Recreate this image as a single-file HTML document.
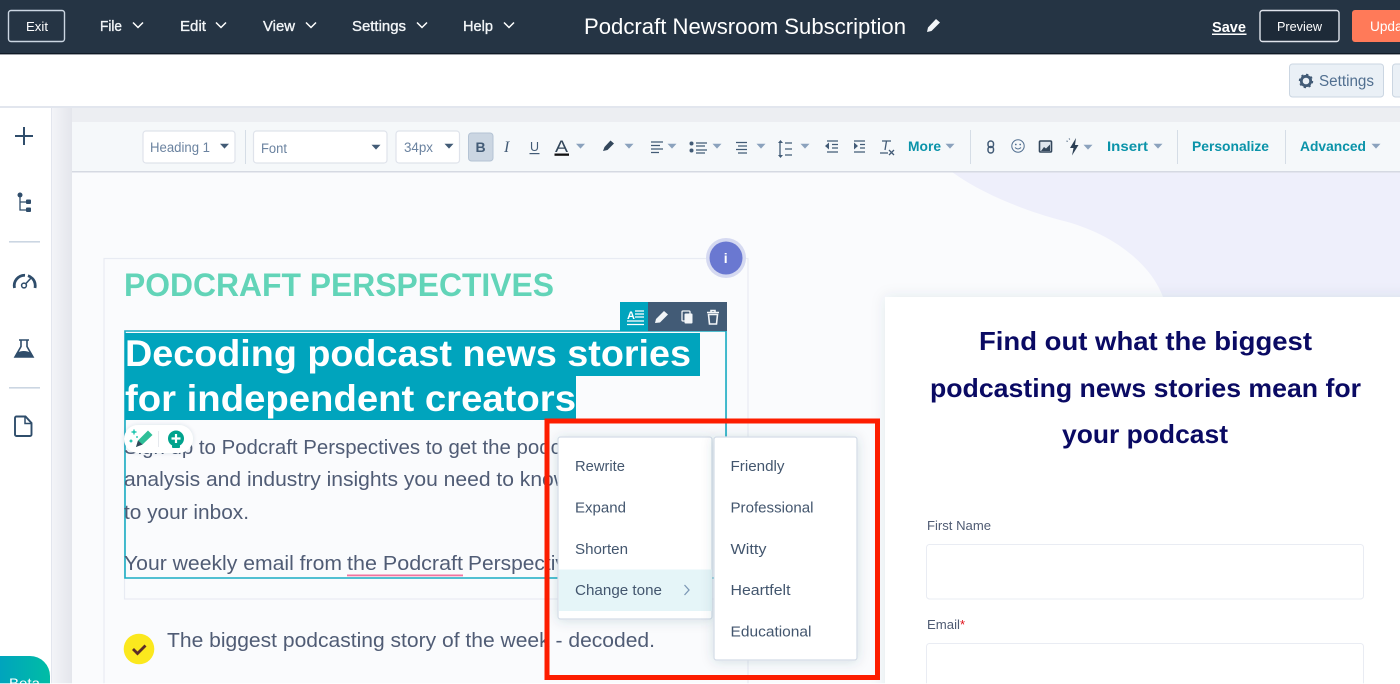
<!DOCTYPE html>
<html lang="en"><head><meta charset="utf-8"><title>Podcraft Newsroom Subscription</title>
<style>
html,body{margin:0;padding:0;width:1400px;height:684px;overflow:hidden;background:#fff}
svg{display:block;filter:blur(.35px)}
.u{font-family:"Liberation Sans",sans-serif}
</style></head><body>
<svg xmlns="http://www.w3.org/2000/svg" width="1400" height="684" viewBox="0 0 1400 684">
<defs>
<path id="c" d="M-4.500-2.200h9L0 2.600z"/>
<path id="v" d="M-5-2.500L0 2.500L5-2.500" fill="none" stroke="#fff" stroke-width="1.500"/>
<linearGradient id="beta" x1="0" x2="1" y1="0" y2="0"><stop offset="0" stop-color="#00a4bd"/><stop offset="1" stop-color="#00bda5"/></linearGradient>
<linearGradient id="sh" x1="0" x2="1" y1="0" y2="0"><stop offset="0" stop-color="#f3f4f8"/><stop offset="1" stop-color="#e4e6ec"/></linearGradient>
<filter id="s" x="-20%" y="-20%" width="140%" height="140%"><feDropShadow dx="0" dy="1" stdDeviation="6" flood-color="#33475b" flood-opacity=".16"/></filter>
<filter id="s2" x="-20%" y="-20%" width="140%" height="140%"><feDropShadow dx="0" dy="0" stdDeviation="7" flood-color="#33475b" flood-opacity=".1"/></filter>
<filter id="s3" x="-20%" y="-30%" width="140%" height="160%"><feDropShadow dx="0" dy="0" stdDeviation="2" flood-color="#33475b" flood-opacity=".14"/></filter>
</defs>

<rect width="1400" height="684" fill="#fff"/>
<!-- canvas -->
<rect x="52" y="108" width="1348" height="576" fill="#f1f3f8"/>
<rect x="52" y="108" width="20" height="576" fill="url(#sh)"/>
<rect x="72" y="108" width="1328" height="14" fill="#eceef2"/>
<rect x="72" y="172" width="1328" height="512" fill="#fafbfd"/>
<path d="M952 172C985 196 1030 212 1060 220C1110 232 1150 262 1163 297H1400V172Z" fill="#eeeffb"/>
<rect x="51" y="108" width="1" height="576" fill="#e3e6ee"/>
<rect x="0" y="106" width="1400" height="2" fill="#e2e6ee"/>

<!-- top bar -->
<rect width="1400" height="53" fill="#253444"/>
<rect y="53" width="1400" height="1.400" fill="#0f1a26"/>
<rect x="8.500" y="10.500" width="56" height="31" rx="2.500" fill="#253444" stroke="#cbd6e2" stroke-width="1.400"/>
<text class="u" x="26" y="31" font-size="13" fill="#fff" textLength="22" lengthAdjust="spacingAndGlyphs">Exit</text>
<g class="u" font-size="14.500" fill="#f2f5f8" stroke="#f2f5f8" stroke-width=".35">
<text x="100" y="31" textLength="22" lengthAdjust="spacingAndGlyphs">File</text>
<text x="180" y="31" textLength="26" lengthAdjust="spacingAndGlyphs">Edit</text>
<text x="263" y="31" textLength="32" lengthAdjust="spacingAndGlyphs">View</text>
<text x="352" y="31" textLength="54" lengthAdjust="spacingAndGlyphs">Settings</text>
<text x="463" y="31" textLength="30" lengthAdjust="spacingAndGlyphs">Help</text>
</g>
<use href="#v" x="138" y="25"/><use href="#v" x="221" y="25"/><use href="#v" x="311" y="25"/><use href="#v" x="422" y="25"/><use href="#v" x="509" y="25"/>
<text class="u" x="584" y="34" font-size="22" fill="#fff" textLength="322" lengthAdjust="spacingAndGlyphs">Podcraft Newsroom Subscription</text>
<path d="M927 32l1-4.500 8-8.500 4 3.500-8.500 8.500z" fill="#f2f5f8"/>
<text class="u" x="1212" y="32" font-size="15" font-weight="700" fill="#fff" textLength="34" lengthAdjust="spacingAndGlyphs">Save</text>
<rect x="1212" y="33.500" width="34.500" height="1.500" fill="#fff"/>
<rect x="1260" y="10.500" width="79" height="31" rx="2.500" fill="#1d2a38" stroke="#dfe3eb" stroke-width="1.400"/>
<text class="u" x="1277" y="31" font-size="13" fill="#fff" textLength="45" lengthAdjust="spacingAndGlyphs">Preview</text>
<rect x="1352" y="10" width="70" height="32" rx="3" fill="#ff7a59"/>
<text class="u" x="1370" y="31" font-size="13.500" fill="#fff" textLength="44" lengthAdjust="spacingAndGlyphs">Update</text>

<!-- second bar -->
<rect x="1289.500" y="64" width="94" height="33" rx="3" fill="#eaf0f6" stroke="#cbd6e2"/>
<rect x="1392.500" y="64" width="40" height="33" rx="3" fill="#eaf0f6" stroke="#cbd6e2"/>
<circle cx="1306" cy="81" r="4.700" fill="none" stroke="#425b76" stroke-width="2.800"/>
<circle cx="1306" cy="81" r="6.400" fill="none" stroke="#425b76" stroke-width="1.600" stroke-dasharray="2.300 2.700"/>
<text class="u" x="1319" y="86" font-size="15.500" fill="#516f90" textLength="55" lengthAdjust="spacingAndGlyphs">Settings</text>

<!-- toolbar -->
<rect x="72" y="122" width="1328" height="49" fill="#f5f8fa"/>
<rect x="72" y="171" width="1328" height="1.500" fill="#d5d9e2"/>
<g fill="#fff" stroke="#dfe3eb" stroke-width="1.200">
<rect x="143" y="131" width="92" height="32" rx="3"/>
<rect x="253.500" y="131" width="133.500" height="32" rx="3"/>
<rect x="396" y="131" width="63.500" height="32" rx="3"/>
</g>
<rect x="245" y="130" width="1" height="34" fill="#d5dde6"/>
<g class="u" font-size="13.500" fill="#6b83a0">
<text x="150" y="152" textLength="60" lengthAdjust="spacingAndGlyphs">Heading 1</text>
<text x="261" y="153" textLength="26" lengthAdjust="spacingAndGlyphs">Font</text>
<text x="404" y="152" textLength="29" lengthAdjust="spacingAndGlyphs">34px</text>
</g>
<g fill="#425b76"><use href="#c" x="224.500" y="146"/><use href="#c" x="376" y="147"/><use href="#c" x="449" y="146"/></g>
<rect x="468.500" y="133" width="24.500" height="28" rx="3" fill="#cbd6e2" stroke="#b4c3d4"/>
<text class="u" x="475.500" y="152" font-size="14" font-weight="700" fill="#425b76">B</text>
<text style="font-family:'Liberation Serif',serif" x="504" y="152" font-size="16" font-style="italic" fill="#425b76">I</text>
<text class="u" x="530" y="151" font-size="12.500" fill="#425b76">U</text>
<rect x="529.500" y="153" width="10" height="1.200" fill="#425b76"/>
<text class="u" x="555" y="152" font-size="17" fill="#33475b" textLength="13" lengthAdjust="spacingAndGlyphs">A</text>
<rect x="554.500" y="153.500" width="14.500" height="2.300" fill="#111"/>
<path d="M603 151l1.500-4 6-6.500 3.500 3-6.500 6.500z" fill="#33475b"/>
<g fill="none" stroke="#425b76" stroke-width="1.300">
<path d="M651 142h12M651 145.500h9M651 149h12M651 152.500h8"/>
<path d="M696 143h11M696 150h11M696 146h9M696 153h9" transform="translate(0 0)"/>
<path d="M736 142.500h11M738 146h9M736 149.500h11M738 153h9"/>
<path d="M780 141.500v15M785 143h7M785 149h7M785 155h7"/>
<path d="M827 141h11M827 152h11M832 144.500h6M832 148h6"/>
<path d="M854 141h11M854 152h11M860 144.500h5M860 148h5"/>
<path d="M882 141h9M886.500 141l-1.500 9M880 153h8M889 150l5 5M894 150l-5 5"/>
</g>
<g fill="#425b76">
<circle cx="691.500" cy="143.500" r="2"/><circle cx="691.500" cy="150.500" r="2"/>
<path d="M778 143l2.500-3 2.500 3zM778 155l2.500 3 2.500-3z"/>
<path d="M829 149.500v-7l-4 3.500zM854 142.500v7l4-3.500z"/>
</g>
<g fill="#8ba2bd">
<use href="#c" x="580.500" y="146"/><use href="#c" x="629" y="146"/><use href="#c" x="672" y="146"/><use href="#c" x="717" y="146"/><use href="#c" x="761" y="146"/><use href="#c" x="805" y="146"/><use href="#c" x="950" y="146"/><use href="#c" x="1088" y="147"/><use href="#c" x="1158" y="146"/><use href="#c" x="1376" y="146"/>
</g>
<g class="u" font-size="14" font-weight="700" fill="#0a93a9">
<text x="908" y="151" textLength="33" lengthAdjust="spacingAndGlyphs">More</text>
<text x="1107" y="151" textLength="41" lengthAdjust="spacingAndGlyphs">Insert</text>
<text x="1192" y="151" textLength="77" lengthAdjust="spacingAndGlyphs">Personalize</text>
<text x="1300" y="151" textLength="66" lengthAdjust="spacingAndGlyphs">Advanced</text>
</g>
<g fill="#d5dde6"><rect x="970" y="130" width="1" height="34"/><rect x="1177" y="130" width="1" height="34"/><rect x="1285" y="130" width="1" height="34"/></g>
<g fill="none" stroke="#425b76" stroke-width="1.500">
<rect x="988" y="141" width="5.500" height="6.500" rx="2.700"/><rect x="988" y="146.500" width="5.500" height="6.500" rx="2.700"/>
</g>
<circle cx="1018" cy="146" r="6.200" fill="none" stroke="#516f90" stroke-width="1"/>
<path d="M1015 147.500q3 3 6 0" fill="none" stroke="#516f90"/><circle cx="1015.800" cy="144.500" r=".9" fill="#516f90"/><circle cx="1020.200" cy="144.500" r=".9" fill="#516f90"/>
<rect x="1039.500" y="141" width="12" height="11" rx="1" fill="#dfe6ee" stroke="#33475b" stroke-width="1.600"/><path d="M1041 151l3-4 2 1.500 4-4v6.500z" fill="#33475b"/>
<path d="M1076 138l-6 10h3.500l-1.500 7.500 6.500-10.500h-3.500z" fill="#2b3f54"/><path d="M1069 138.500l.8 1M1066.500 141l1.200.4" stroke="#425b76"/>

<!-- sidebar -->
<path d="M24 127v18M15 136h18" stroke="#2f4d6b" stroke-width="2"/>
<g fill="#2f4d6b"><circle cx="20" cy="195" r="2.500"/><rect x="26" y="199.500" width="5" height="4.500" rx="1"/><rect x="26" y="207.500" width="5" height="4.500" rx="1"/></g>
<path d="M20 195v15h6M20 202h6" fill="none" stroke="#2f4d6b" stroke-width="1.300"/>
<rect x="9" y="241" width="31" height="1.600" fill="#cbd6e2"/>
<rect x="9" y="387" width="31" height="1.600" fill="#cbd6e2"/>
<path d="M14.500 288A10.500 10.500 0 1 1 35 288" fill="none" stroke="#2f4d6b" stroke-width="2.800" stroke-dasharray="19 3 11 0"/>
<circle cx="24" cy="285.500" r="2.400" fill="#fff" stroke="#2f4d6b" stroke-width="1.500"/><path d="M25.500 284l6-6.500" stroke="#2f4d6b" stroke-width="1.600"/>
<path d="M19 340h10M21 340v6.500l-6 10.500h18l-6-10.500V340" fill="none" stroke="#2f4d6b" stroke-width="1.600"/>
<path d="M16.500 353q7-4 15 0l2 4h-19z" fill="#2f4d6b"/>
<path d="M16.500 416.500h9l6 6.500v11.500a1.500 1.500 0 0 1-1.500 1.500h-13.500a1.500 1.500 0 0 1-1.500-1.500v-16.500a1.500 1.500 0 0 1 1.500-1.500z" fill="#fff" stroke="#2f4d6b" stroke-width="1.900"/>
<path d="M25 416.500v7h6.500" fill="none" stroke="#2f4d6b" stroke-width="1.500"/>
<path d="M0 656h30a20 20 0 0 1 20 20v8H0z" fill="url(#beta)"/>
<text class="u" x="9" y="688" font-size="14" fill="#fff" textLength="31" lengthAdjust="spacingAndGlyphs">Beta</text>

<!-- email panel -->
<rect x="104" y="258.500" width="644" height="440" fill="#fafbfd" stroke="#e8ebf3" stroke-width="1.200"/>
<text class="u" x="124" y="296" font-size="32" font-weight="700" fill="#62d4b8" textLength="430" lengthAdjust="spacingAndGlyphs">PODCRAFT PERSPECTIVES</text>
<rect x="124.500" y="331" width="602" height="268" fill="none" stroke="#e8ebf3" stroke-width="1.200"/>
<path d="M726 331H125v247h601z" fill="none" stroke="#00a4bd" stroke-width="1.600" stroke-opacity=".9"/>
<rect x="125" y="333" width="575" height="43" fill="#00a4bd"/>
<rect x="125" y="376" width="451" height="44" fill="#00a4bd"/>
<g class="u" font-size="37" font-weight="700" fill="#fff">
<text x="125" y="366" textLength="566" lengthAdjust="spacingAndGlyphs">Decoding podcast news stories</text>
<text x="125" y="411" textLength="451" lengthAdjust="spacingAndGlyphs">for independent creators</text>
</g>
<rect x="620" y="302" width="28" height="29" fill="#00a4bd"/>
<rect x="648" y="302" width="79" height="29" fill="#425b76"/>
<g stroke="#fff" stroke-width="1.200" fill="none"><path d="M635 311h9M635 314h9M635 317h9M627 321h17M627 324.500h17"/></g>
<text class="u" x="627" y="319" font-size="11" font-weight="700" fill="#fff">A</text>
<path d="M655 323l1-4 8-8 4 3.500-8 8z" fill="#f2f5f8"/>
<rect x="682" y="311" width="8" height="10" rx="1" fill="none" stroke="#f2f5f8" stroke-width="1.300"/><rect x="684.500" y="313.500" width="8" height="10" rx="1" fill="#f2f5f8"/>
<path d="M707 312.500h12M711 312.500v-2h4v2M708.500 314.500l1 9.500h7l1-9.500z" fill="none" stroke="#f2f5f8" stroke-width="1.600"/>
<circle cx="726" cy="258" r="20" fill="#d5d9f1"/><circle cx="726" cy="258" r="16.500" fill="#6a78d1"/>
<text class="u" x="723.800" y="263" font-size="14" font-weight="700" fill="#fff">i</text>

<g class="u" font-size="20" fill="#505c75">
<text x="124" y="454" textLength="464" lengthAdjust="spacingAndGlyphs">Sign up to Podcraft Perspectives to get the podcast</text>
<text x="124" y="486" textLength="445" lengthAdjust="spacingAndGlyphs">analysis and industry insights you need to know</text>
<text x="124" y="519" textLength="125" lengthAdjust="spacingAndGlyphs">to your inbox.</text>
<text x="124" y="570" textLength="218" lengthAdjust="spacingAndGlyphs">Your weekly email from</text>
<text x="347" y="570" textLength="116" lengthAdjust="spacingAndGlyphs">the Podcraft</text>
<text x="468" y="570" textLength="120" lengthAdjust="spacingAndGlyphs">Perspectives</text>
<text x="167" y="647" textLength="488" lengthAdjust="spacingAndGlyphs">The biggest podcasting story of the week - decoded.</text>
</g>
<rect x="347" y="574.500" width="116" height="1.800" fill="#f2739f"/>
<circle cx="139" cy="649" r="15.300" fill="#fbe81e"/>
<path d="M133 649l4.500 4.500 8-8" fill="none" stroke="#5b2c28" stroke-width="2.800"/>
<rect x="124" y="425" width="69" height="28" rx="14" fill="#fff" filter="url(#s3)"/>
<path d="M136 447l2-6.500 10-10 4.500 4.500-10 9.500z" fill="#2fbf98"/><path d="M136 447l2-6.500 4.500 4z" fill="#33475b"/>
<path d="M134 429.500v5M131.500 432h5M131 439.500v3M129.500 441h3M137 436v2" stroke="#00bda5" stroke-width="1.200"/>
<rect x="158" y="431" width="1" height="16" fill="#e6e9ee"/>
<circle cx="176" cy="438.500" r="8" fill="#00a38d"/><path d="M176 434v9M171.500 438.500h9" stroke="#fff" stroke-width="2.200"/><rect x="172" y="445" width="8" height="3" rx="1" fill="#00a38d"/>

<!-- form -->
<rect x="885" y="297" width="530" height="400" fill="#fff" filter="url(#s2)"/>
<g class="u" font-size="26" font-weight="700" fill="#0a0a63">
<text x="979" y="350" textLength="333" lengthAdjust="spacingAndGlyphs">Find out what the biggest</text>
<text x="930" y="397" textLength="431" lengthAdjust="spacingAndGlyphs">podcasting news stories mean for</text>
<text x="1062" y="443" textLength="166" lengthAdjust="spacingAndGlyphs">your podcast</text>
</g>
<g class="u" font-size="13" fill="#4f5b73">
<text x="927" y="530" textLength="64" lengthAdjust="spacingAndGlyphs">First Name</text>
<text x="927" y="629" textLength="33" lengthAdjust="spacingAndGlyphs">Email</text>
</g>
<text class="u" x="960" y="629" font-size="13" fill="#e0101a">*</text>
<rect x="926.500" y="544.500" width="437" height="54.500" rx="3" fill="#fff" stroke="#e9ecf3"/>
<rect x="926.500" y="643.500" width="437" height="60" rx="3" fill="#fff" stroke="#e9ecf3"/>

<!-- red frame + menus -->
<rect x="547" y="421" width="330.500" height="256.500" fill="none" stroke="#fd1d00" stroke-width="5"/>
<rect x="558" y="437" width="154" height="182" rx="2.500" fill="#fff" stroke="#d3dce7" stroke-width="1.200" filter="url(#s)"/>
<rect x="559" y="569.500" width="153" height="41.500" fill="#e5f5f8"/>
<rect x="714" y="437" width="143" height="223" rx="2.500" fill="#fff" stroke="#d3dce7" stroke-width="1.200" filter="url(#s)"/>
<g class="u" font-size="15" fill="#43566e">
<text x="575" y="471" textLength="50" lengthAdjust="spacingAndGlyphs">Rewrite</text>
<text x="575" y="512.500" textLength="51" lengthAdjust="spacingAndGlyphs">Expand</text>
<text x="575" y="554" textLength="53" lengthAdjust="spacingAndGlyphs">Shorten</text>
<text x="575" y="595" textLength="87" lengthAdjust="spacingAndGlyphs">Change tone</text>
<text x="730.500" y="471" textLength="54" lengthAdjust="spacingAndGlyphs">Friendly</text>
<text x="730.500" y="512.500" textLength="83" lengthAdjust="spacingAndGlyphs">Professional</text>
<text x="730.500" y="554" textLength="36" lengthAdjust="spacingAndGlyphs">Witty</text>
<text x="730.500" y="595" textLength="60" lengthAdjust="spacingAndGlyphs">Heartfelt</text>
<text x="730.500" y="636.500" textLength="81" lengthAdjust="spacingAndGlyphs">Educational</text>
</g>
<path d="M684.500 585l4.500 5-4.500 5" fill="none" stroke="#7c98b6" stroke-width="1.300"/>
<rect x="0" y="683" width="1400" height="1" fill="#fff" fill-opacity=".7"/>
</svg>
</body></html>
